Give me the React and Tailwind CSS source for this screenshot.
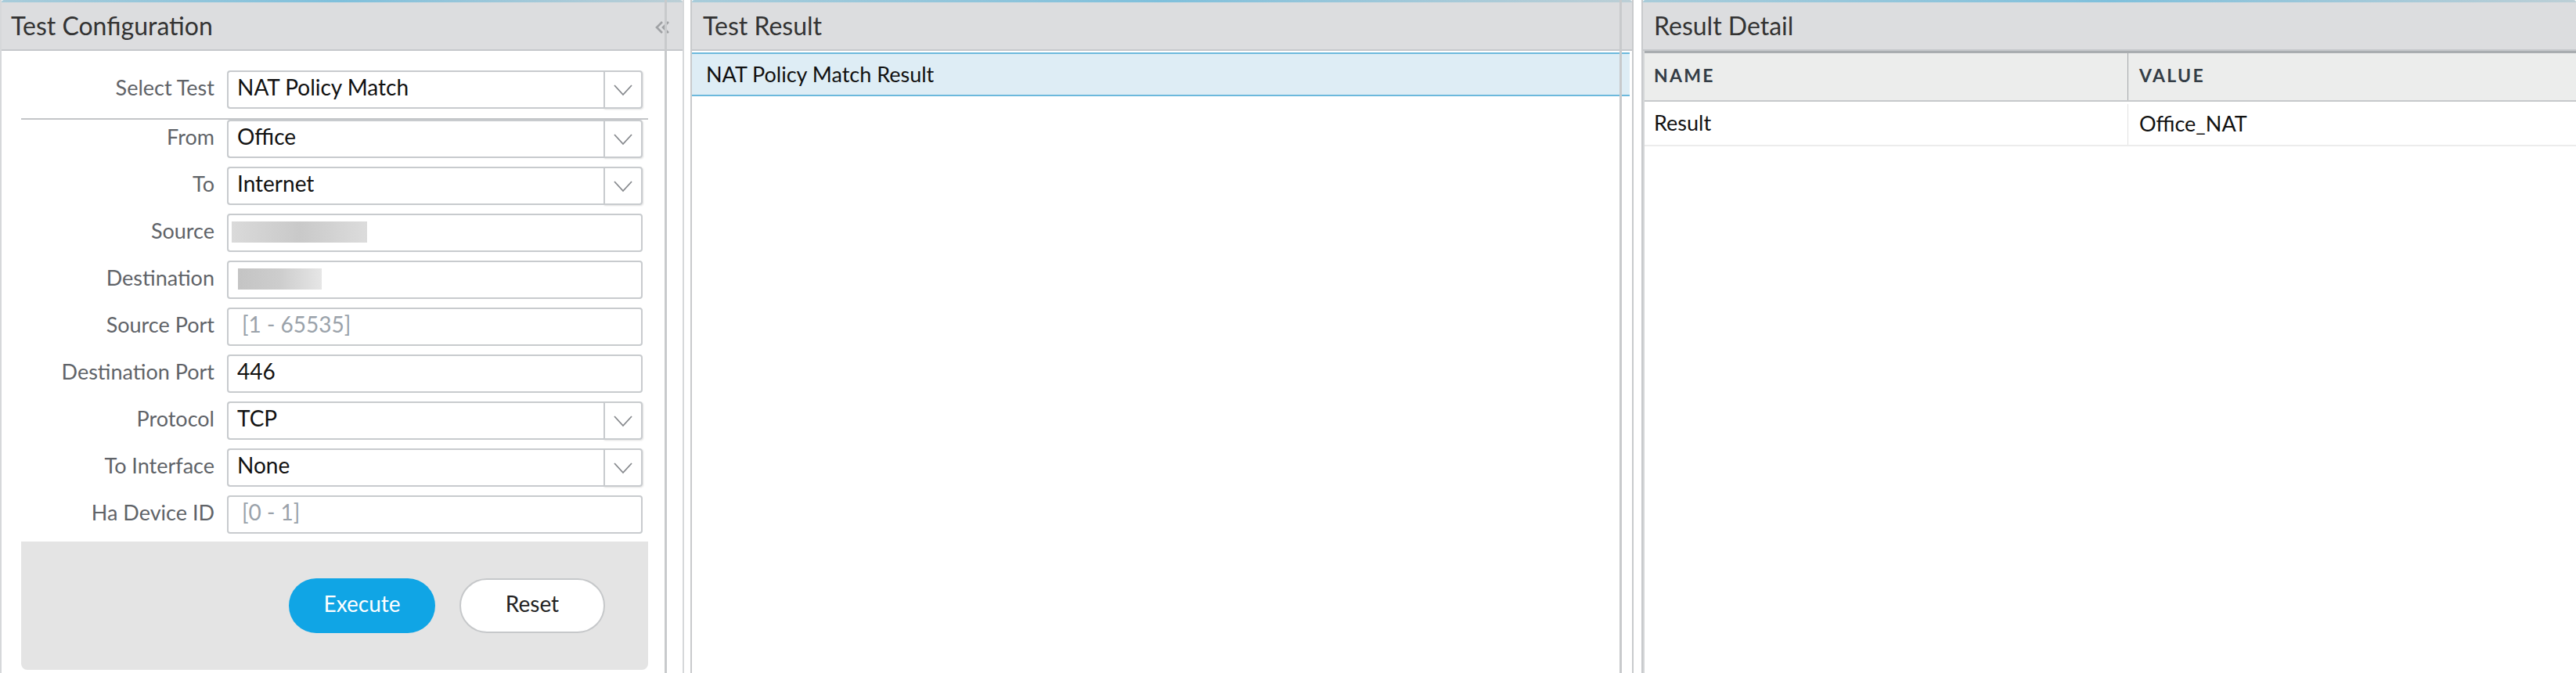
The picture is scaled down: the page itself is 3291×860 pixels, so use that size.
import React from "react";

const fields = [
  { label: "From", type: "select", value: "Office" },
  { label: "To", type: "select", value: "Internet" },
  { label: "Source", type: "blur", blur: "ml-[4px] w-[173px] bg-gradient-to-r from-[#dadada] via-[#c9c9c9] to-[#dcdcdc]" },
  { label: "Destination", type: "blur", blur: "ml-[12px] w-[107px] bg-gradient-to-r from-[#c4c4c4] via-[#cdcdcd] to-[#e6e6e6]" },
  { label: "Source Port", type: "text", placeholder: "[1 - 65535]" },
  { label: "Destination Port", type: "text", value: "446" },
  { label: "Protocol", type: "select", value: "TCP" },
  { label: "To Interface", type: "select", value: "None" },
  { label: "Ha Device ID", type: "text", placeholder: "[0 - 1]" },
];

function Chevron() {
  return (
    <svg width="26" height="16" viewBox="0 0 26 16" fill="none">
      <polyline points="2,2 13,14 24,2" stroke="#85888c" strokeWidth="1.8" />
    </svg>
  );
}

function Collapse() {
  return (
    <svg width="24" height="18" viewBox="0 0 24 18" fill="none">
      <polyline points="10,2 3,9 10,16" stroke="#a0a2a5" strokeWidth="2.6" />
      <polyline points="18,2 11,9 18,16" stroke="#a0a2a5" strokeWidth="2.6" />
    </svg>
  );
}

function SelectBox({ value }) {
  return (
    <div className="flex h-[49px] w-[531px]">
      <div className="flex flex-1 items-center rounded-l-[4px] border-2 border-r-0 border-[#c8cbce] pb-[7px] pl-[11px] text-[28px] text-[#111]">
        {value}
      </div>
      <div className="flex w-[50px] items-center justify-center rounded-r-[4px] border-2 border-[#c8cbce] shadow-[1px_1px_2px_rgba(0,0,0,0.12)]">
        <Chevron />
      </div>
    </div>
  );
}

function TextBox({ value, placeholder, blur }) {
  if (blur) {
    return (
      <div className="flex h-[49px] w-[531px] items-center rounded-[4px] border-2 border-[#c8cbce]">
        <div className={`mb-[2px] h-[27px] ${blur}`} />
      </div>
    );
  }
  return (
    <div className="flex h-[49px] w-[531px] items-center rounded-[4px] border-2 border-[#c8cbce] pb-[7px] text-[28px]">
      {value ? (
        <span className="pl-[11px] text-[#111]">{value}</span>
      ) : (
        <span className="pl-[17px] text-[#9aa2aa]">{placeholder}</span>
      )}
    </div>
  );
}

function Row({ label, children }) {
  return (
    <div className="flex h-[49px] items-center">
      <div className="w-[247px] pb-[7px] text-right text-[27px] text-[#5f6368]">{label}</div>
      <div className="ml-[16px]">{children}</div>
    </div>
  );
}

function PanelHeader({ title, pad }) {
  return (
    <>
      <div className="h-[3px] rounded-t-[4px] bg-gradient-to-r from-[#a8ccda] via-[#7fc0dc] to-[#bccfd6]" />
      <div className={`flex h-[62px] items-center border-b-2 border-[#c5c8cb] bg-[#dcdddf] text-[32px] text-[#333] ${pad}`}>
        {title}
      </div>
    </>
  );
}

export default function App() {
  return (
    <div className="flex h-[860px] w-[3291px] overflow-hidden bg-white font-['Lato',sans-serif] leading-none">
      {/* Test Configuration */}
      <div className="relative flex w-[874px] flex-col border-x-2 border-[#d6d8da]">
        <PanelHeader title="Test Configuration" pad="pl-[12px]" />
        <div className="absolute left-[834px] top-[26px]">
          <Collapse />
        </div>
        <div className="absolute bottom-0 left-[847px] top-0 w-[3px] bg-[#c8cacc]" />
        <div className="ml-[25px] mt-[25px] w-[801px]">
          <div className="border-b-2 border-[#c3c5c8] pb-[12px]">
            <Row label="Select Test">
              <SelectBox value="NAT Policy Match" />
            </Row>
          </div>
          <div className="flex flex-col gap-[11px]">
            {fields.map((f) => (
              <Row key={f.label} label={f.label}>
                {f.type === "select" ? (
                  <SelectBox value={f.value} />
                ) : (
                  <TextBox value={f.value} placeholder={f.placeholder} blur={f.blur} />
                )}
              </Row>
            ))}
          </div>
          <div className="mt-[10px] flex h-[164px] items-center justify-end gap-[31px] rounded-b-[8px] bg-[#e4e4e4] pr-[55px]">
            <button className="h-[70px] w-[187px] rounded-full bg-[#10a5e5] pb-[7px] text-[28px] text-white">
              Execute
            </button>
            <button className="h-[70px] w-[186px] rounded-full border-2 border-[#c6c8ca] bg-white pb-[7px] text-[28px] text-[#222]">
              Reset
            </button>
          </div>
        </div>
      </div>

      {/* Test Result */}
      <div className="relative ml-[8px] flex w-[1205px] flex-col border-x-2 border-[#c8cacc]">
        <PanelHeader title="Test Result" pad="pl-[14px]" />
        <div className="absolute bottom-0 left-[1185px] top-0 w-[3px] bg-[#c8cacc]" />
        <div className="mr-[3px] mt-[2px] flex h-[56px] items-center border-y-2 border-[#6cb9dc] bg-[#deedf5] pb-[2px] pl-[18px] text-[27px] text-[#111]">
          NAT Policy Match Result
        </div>
      </div>

      {/* Result Detail */}
      <div className="ml-[10px] flex flex-1 flex-col border-l-2 border-[#c8cacc]">
        <PanelHeader title="Result Detail" pad="pl-[14px]" />
        <div className="flex flex-1 flex-col border-l-2 border-[#d4d6d8]">
          <div className="flex h-[65px] items-stretch border-b-2 border-t-[3px] border-b-[#c6c9cb] border-t-[#a9adb0] bg-[#ecedec] text-[23px] font-bold tracking-[0.1em] text-[#343d46]">
            <div className="flex w-[617px] items-center pb-[4px] pl-[12px]">NAME</div>
            <div className="flex flex-1 items-center border-l border-[#a3a6a9] pb-[4px] pl-[14px]">VALUE</div>
          </div>
          <div className="flex h-[57px] items-stretch border-b-2 border-[#ececec] text-[27px] text-[#111]">
            <div className="flex w-[617px] items-center pb-[2px] pl-[12px]">Result</div>
            <div className="mt-[3px] flex flex-1 items-center border-l border-[#e2e2e2] pb-[4px] pl-[14px]">Office_NAT</div>
          </div>
        </div>
      </div>
    </div>
  );
}
